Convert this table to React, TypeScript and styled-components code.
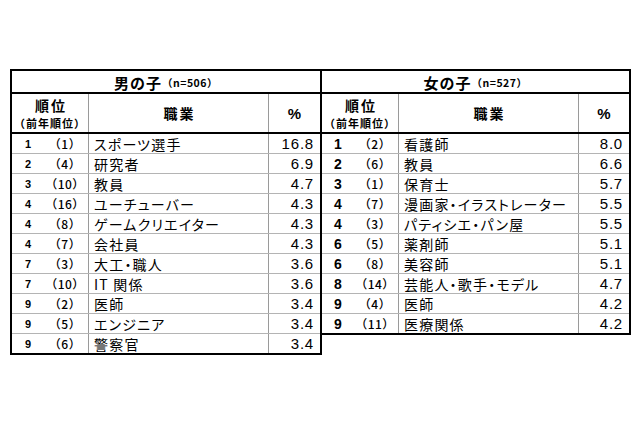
import React from "react";
import styled, { createGlobalStyle } from "styled-components";

const GlobalStyle = createGlobalStyle`
  html, body { margin: 0; padding: 0; background: #ffffff; }
  body { font-family: "Noto Sans CJK JP", "Noto Sans", sans-serif; color: #000; }
`;

type Row = { rank: string; prev: string; job: string; pct: string };

const boys: Row[] = [
  { rank: "1", prev: "1", job: "スポーツ選手", pct: "16.8" },
  { rank: "2", prev: "4", job: "研究者", pct: "6.9" },
  { rank: "3", prev: "10", job: "教員", pct: "4.7" },
  { rank: "4", prev: "16", job: "ユーチューバー", pct: "4.3" },
  { rank: "4", prev: "8", job: "ゲームクリエイター", pct: "4.3" },
  { rank: "4", prev: "7", job: "会社員", pct: "4.3" },
  { rank: "7", prev: "3", job: "大工・職人", pct: "3.6" },
  { rank: "7", prev: "10", job: "IT 関係", pct: "3.6" },
  { rank: "9", prev: "2", job: "医師", pct: "3.4" },
  { rank: "9", prev: "5", job: "エンジニア", pct: "3.4" },
  { rank: "9", prev: "6", job: "警察官", pct: "3.4" },
];

const girls: Row[] = [
  { rank: "1", prev: "2", job: "看護師", pct: "8.0" },
  { rank: "2", prev: "6", job: "教員", pct: "6.6" },
  { rank: "3", prev: "1", job: "保育士", pct: "5.7" },
  { rank: "4", prev: "7", job: "漫画家・イラストレーター", pct: "5.5" },
  { rank: "4", prev: "3", job: "パティシエ・パン屋", pct: "5.5" },
  { rank: "6", prev: "5", job: "薬剤師", pct: "5.1" },
  { rank: "6", prev: "8", job: "美容師", pct: "5.1" },
  { rank: "8", prev: "14", job: "芸能人・歌手・モデル", pct: "4.7" },
  { rank: "9", prev: "4", job: "医師", pct: "4.2" },
  { rank: "9", prev: "11", job: "医療関係", pct: "4.2" },
];

const Page = styled.div`
  display: flex;
  align-items: flex-start;
  padding: 69px 0 0 10px;
`;

const Table = styled.div<{ $joined?: boolean; $width: number }>`
  box-sizing: border-box;
  width: ${(p) => p.$width}px;
  border: 2px solid #000;
  ${(p) => (p.$joined ? "border-left: none;" : "")}
`;

const TitleRow = styled.div`
  box-sizing: border-box;
  height: 23px;
  border-bottom: 2px solid #000;
  display: flex;
  align-items: center;
  justify-content: center;
  padding-top: 1px;
`;

const Title = styled.span`
  font-size: 15px;
  font-weight: 700;
  letter-spacing: 1px;
`;

const TitleSub = styled.span`
  font-size: 10.5px;
  font-weight: 700;
  letter-spacing: 0.5px;
`;

const HeaderRow = styled.div<{ $last: number }>`
  box-sizing: border-box;
  display: grid;
  grid-template-columns: 77px 180px ${(p) => p.$last}px;
  height: 40px;
  border-bottom: 2px solid #000;
`;

const HeaderCell = styled.div<{ $end?: boolean }>`
  box-sizing: border-box;
  display: flex;
  flex-direction: column;
  align-items: center;
  justify-content: center;
  border-right: ${(p) => (p.$end ? "none" : "1px solid #9a9a9a")};
  font-weight: 700;
`;

const HeadMain = styled.span`
  font-size: 14px;
  line-height: 19px;
  letter-spacing: 2px;
  margin-right: -2px;
`;

const HeadSub = styled.span`
  font-size: 11px;
  line-height: 16px;
  letter-spacing: 1px;
`;

const HeadPct = styled.span`
  font-family: "Liberation Sans", Arial, sans-serif;
  font-size: 15px;
  font-weight: 700;
`;

const DataRow = styled.div<{ $last: number }>`
  box-sizing: border-box;
  display: grid;
  grid-template-columns: 77px 180px ${(p) => p.$last}px;
  height: 20px;
  border-bottom: 1px solid #b4b4b4;
  &:last-child {
    height: 19px;
    border-bottom: none;
  }
`;

const RankCell = styled.div`
  box-sizing: border-box;
  display: grid;
  grid-template-columns: 32px 1fr;
  align-items: center;
  border-right: 1px solid #9a9a9a;
`;

const RankNum = styled.span<{ $size: number }>`
  font-family: "Liberation Sans", Arial, sans-serif;
  font-size: ${(p) => p.$size}px;
  font-weight: 700;
  text-align: center;
`;

const PrevRank = styled.span`
  font-size: 12px;
  font-weight: 500;
  letter-spacing: 0.5px;
  text-align: center;
  padding-right: 2px;
`;

const JobCell = styled.div`
  box-sizing: border-box;
  display: flex;
  align-items: center;
  padding-left: 5px;
  border-right: 1px solid #9a9a9a;
  font-size: 14px;
  font-feature-settings: "palt";
  letter-spacing: 1.2px;
  white-space: nowrap;
  overflow: hidden;
`;

const PctCell = styled.div`
  box-sizing: border-box;
  display: flex;
  align-items: center;
  justify-content: flex-end;
  padding-right: 6px;
  font-family: "Liberation Sans", Arial, sans-serif;
  font-size: 15px;
  letter-spacing: 0.8px;
`;

type RankTableProps = {
  title: string;
  n: string;
  rows: Row[];
  joined?: boolean;
  width: number;
  last: number;
  rankSize: number;
};

function RankTable({ title, n, rows, joined, width, last, rankSize }: RankTableProps) {
  return (
    <Table $joined={joined} $width={width}>
      <TitleRow>
        <Title>{title}</Title>
        <TitleSub>（n={n}）</TitleSub>
      </TitleRow>
      <HeaderRow $last={last}>
        <HeaderCell>
          <HeadMain>順位</HeadMain>
          <HeadSub>（前年順位）</HeadSub>
        </HeaderCell>
        <HeaderCell>
          <HeadMain>職業</HeadMain>
        </HeaderCell>
        <HeaderCell $end>
          <HeadPct>%</HeadPct>
        </HeaderCell>
      </HeaderRow>
      {rows.map((r, i) => (
        <DataRow key={i} $last={last}>
          <RankCell>
            <RankNum $size={rankSize}>{r.rank}</RankNum>
            <PrevRank>（{r.prev}）</PrevRank>
          </RankCell>
          <JobCell>{r.job}</JobCell>
          <PctCell>{r.pct}</PctCell>
        </DataRow>
      ))}
    </Table>
  );
}

export default function App() {
  return (
    <>
      <GlobalStyle />
      <Page>
        <RankTable title="男の子" n="506" rows={boys} width={312} last={51} rankSize={11} />
        <RankTable title="女の子" n="527" rows={girls} joined width={309} last={50} rankSize={14} />
      </Page>
    </>
  );
}
